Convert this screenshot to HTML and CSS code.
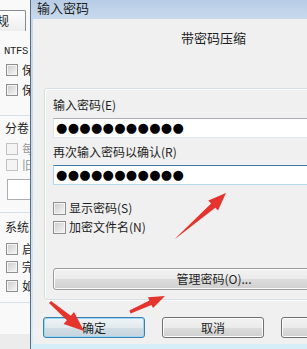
FILE: index.html
```html
<!DOCTYPE html>
<html lang="zh-CN">
<head>
    <meta charset="UTF-8">
    <title>输入密码</title>
    <link rel="stylesheet" href="styles.css">
</head>
<body>

    <div class="side">
        <div class="side-tab">常规</div>
        <div class="ntfs">NTFS</div>
        <div class="side-row r1"><span class="box small"></span><span>保存</span></div>
        <div class="side-row r2"><span class="box small"></span><span>保存</span></div>
        <div class="side-sep s1"></div>
        <div class="side-title t1">分卷</div>
        <div class="side-row r3"><span class="box small dim"></span><span>每个</span></div>
        <div class="side-row r4"><span class="box small dim"></span><span>旧式</span></div>
        <div class="side-input"></div>
        <div class="side-sep s2"></div>
        <div class="side-title t2">系统</div>
        <div class="side-row r5"><span class="box small"></span><span>启动</span></div>
        <div class="side-row r6"><span class="box small"></span><span>完成</span></div>
        <div class="side-row r7"><span class="box small"></span><span>如果</span></div>
        <div class="side-sep s3"></div>
        <div class="side-foot"></div>
    </div>

    <div class="dlg">
        <div class="dlg-title">输入密码</div>
        <div class="dlg-body">
            <div class="caption">带密码压缩</div>

            <div class="group">
                <div class="label">输入密码(E)</div>
                <div class="field">●●●●●●●●●●●</div>
                <div class="label second">再次输入密码以确认(R)</div>
                <div class="field focus">●●●●●●●●●●●</div>
                <div class="check c1"><span class="box"></span><span>显示密码(S)</span></div>
                <div class="check c2"><span class="box"></span><span>加密文件名(N)</span></div>
                <div class="btn wide">管理密码(O)...</div>
            </div>

            <div class="btns">
                <div class="btn default">确定</div>
                <div class="btn">取消</div>
                <div class="btn">帮助</div>
            </div>
        </div>
    </div>

    <!-- red arrows drawn over the screenshot -->
    <svg class="marks" viewBox="0 0 307 349">
        <polygon points="175,238.9 215.3,207.7 218,210.6 226,193 208.3,200.6 211.1,203.4 177,236.8" />
        <polygon points="49,303.1 66.9,320.3 63.6,324.1 84,331 74,311.9 70.8,315.7 51,300.9" />
        <polygon points="130.6,313.4 151.5,304.9 153,308.1 165,296 148,297.2 149.4,300.4 129.4,310.6" />
    </svg>

</body>
</html>
```

FILE: styles.css
```css
body {
    margin: 0;
    height: 349px;
    display: flex;
    overflow: hidden;
    position: relative;
    font-family: "Noto Sans CJK SC", sans-serif;
    font-size: 12px;
    color: #1e1e1e;
    background: #f0f0f0;
}

/* left part of the window behind the dialog */
.side {
    width: 30px;
    flex: none;
    display: flex;
    flex-direction: column;
    background: #f9f9f9;
    overflow: hidden;
    white-space: nowrap;
}

.side-tab {
    margin: 10px 0 0 -30px;
    width: 56px;
    height: 21px;
    box-sizing: border-box;
    border: 1px solid #898c95;
    border-bottom: none;
    border-radius: 2px 2px 0 0;
    background: linear-gradient(#fdfdfd, #eeeeee);
    text-align: right;
    padding-right: 16px;
    line-height: 20px;
}

.ntfs {
    margin: 14px 0 0 4px;
    font-family: "Liberation Mono", monospace;
    font-size: 10.5px;
    letter-spacing: -0.3px;
    line-height: 12px;
}

.side-row {
    display: flex;
    align-items: center;
    gap: 4px;
    margin-left: 6px;
    height: 13px;
    line-height: 13px;
}

.r1 { margin-top: 6px; }
.r2 { margin-top: 7px; }
.r3 { margin-top: 7px; color: #9a9a9a; }
.r4 { margin-top: 3px; color: #9a9a9a; }
.r5 { margin-top: 8px; }
.r6 { margin-top: 5px; }
.r7 { margin-top: 6px; }

.side-sep {
    height: 1px;
    background: #d5dfe5;
    margin-left: -5px;
}

.s1 { margin-top: 19px; }
.s2 { margin-top: 12px; }
.s3 { margin-top: 10px; }

.side-title {
    margin-left: 5px;
    line-height: 14px;
}

.t1 { margin-top: 5px; }
.t2 { margin-top: 7px; }

.side-input {
    margin: 8px 0 0 7px;
    height: 19px;
    border: 1px solid #abadb3;
    border-right: none;
    background: #fff;
}

.side-foot {
    margin-top: 31px;
    flex: 1;
    background: #ececec;
}

/* the password dialog */
.dlg {
    flex: none;
    width: 360px;
    border-left: 1px solid #5a6c80;
    padding: 0 0 5px 2px;
    background: linear-gradient(#c4d7ec, #c9dbee 60%, #d6eef8);
}

.dlg-title {
    height: 19px;
    margin-left: -2px;
    padding-left: 6px;
    font-size: 13px;
    line-height: 16px;
    background: linear-gradient(#b7cde6, #c8d9ec);
}

.dlg-body {
    height: 325px;
    padding: 0 9px 0 10px;
    background: #f0f0f0;
}

.caption {
    padding-top: 11px;
    font-size: 13px;
    line-height: 16px;
    text-align: center;
}

.group {
    margin: 42px 0 0 1px;
    padding: 9px 8px;
    border: 1px solid #d5dfe5;
    border-radius: 3px;
    box-shadow: inset 1px 1px 0 #fff, 1px 1px 0 #fff;
}

.label {
    line-height: 14px;
}

.label.second {
    margin-top: 7px;
}

.field {
    margin-top: 6px;
    height: 20px;
    box-sizing: border-box;
    padding-left: 2px;
    border: 1px solid;
    border-color: #abadb3 #dbdfe6 #e3e9ef #e2e3ea;
    background: #fff;
    font-family: "DejaVu Sans", sans-serif;
    font-size: 13px;
    letter-spacing: 0.3px;
    line-height: 18px;
    color: #000;
}

.field.focus {
    border-color: #3d7bad #a4c9e3 #b7d9ed #b5cfe7;
}

.check {
    display: flex;
    align-items: center;
    gap: 3px;
    line-height: 14px;
}

.check.c1 { margin-top: 16px; }
.check.c2 { margin-top: 5px; }

.box {
    width: 13px;
    height: 13px;
    flex: none;
    box-sizing: border-box;
    border: 1px solid #8e8f8f;
    background: linear-gradient(135deg, #cbcbcb, #f7f7f7);
    box-shadow: inset 0 0 0 1px #f4f4f4;
}

.box.small {
    width: 12px;
    height: 12px;
}

.box.dim {
    border-color: #c2c2c2;
    background: #f4f4f4;
}

.btn {
    width: 102px;
    height: 21px;
    flex: none;
    box-sizing: border-box;
    border: 1px solid #707070;
    border-radius: 3px;
    background: linear-gradient(#f2f2f2, #ebebeb 50%, #dddddd 50%, #cfcfcf);
    box-shadow: inset 0 0 0 1px #fcfcfc;
    text-align: center;
    line-height: 19px;
}

.btn.wide {
    width: auto;
    height: 22px;
    margin-top: 34px;
    border-color: #9c9c9c;
    line-height: 20px;
}

.btn.default {
    border-color: #3c7fb1;
    background: linear-gradient(#eef3f6, #e2eaef 50%, #d2dde5 50%, #c6d4de);
    box-shadow: inset 0 0 0 1px #9bd6f3;
}

.btns {
    display: flex;
    gap: 17px;
    margin-top: 17px;
}

.marks {
    position: absolute;
    left: 0;
    top: 0;
    width: 307px;
    height: 349px;
    fill: #e5332d;
}
```
